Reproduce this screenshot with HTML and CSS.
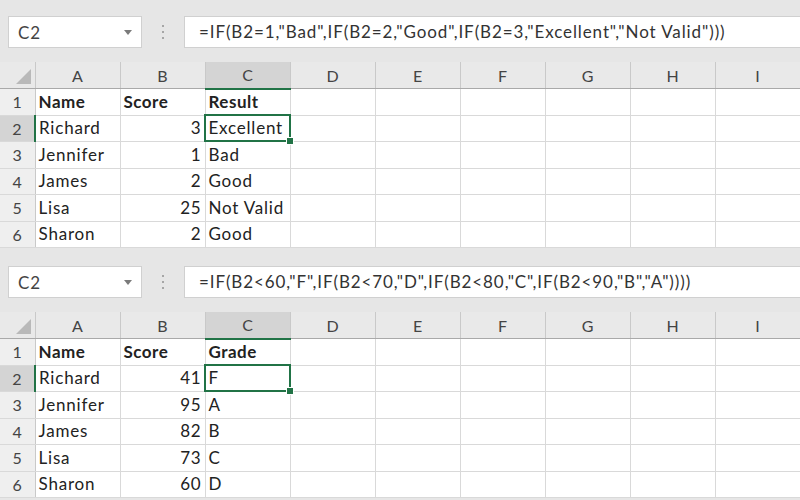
FILE: index.html
```html
<!DOCTYPE html>
<html lang="en">
<head>
  <meta charset="UTF-8">
  <title>IF Function Examples</title>
  <link rel="stylesheet" href="styles.css">
</head>
<body>
  <div class="panel">
    <div class="toolbar">
      <div class="name-box">
        <span>C2</span>
        <svg class="caret" width="8" height="5" viewBox="0 0 8 5"><path d="M0 0h8L4 5z" fill="#7b7b7b"/></svg>
      </div>
      <div class="dots"><i></i><i></i><i></i></div>
      <div class="formula">=IF(B2=1,"Bad",IF(B2=2,"Good",IF(B2=3,"Excellent","Not Valid")))</div>
    </div>
    <table class="sheet">
      <colgroup><col class="rh"><col span="9" class="col"></colgroup>
      <tr class="hdr">
        <th class="corner"><svg width="35" height="26" viewBox="0 0 35 26"><path d="M16 22h15V7z" fill="#b9b9b9"/></svg></th>
        <th>A</th><th>B</th><th class="sel">C</th><th>D</th><th>E</th><th>F</th><th>G</th><th>H</th><th>I</th>
      </tr>
      <tr><th>1</th><td class="bold">Name</td><td class="bold">Score</td><td class="bold">Result</td><td></td><td></td><td></td><td></td><td></td><td></td></tr>
      <tr><th class="sel">2</th><td>Richard</td><td class="num">3</td><td class="active">Excellent</td><td></td><td></td><td></td><td></td><td></td><td></td></tr>
      <tr><th>3</th><td>Jennifer</td><td class="num">1</td><td>Bad</td><td></td><td></td><td></td><td></td><td></td><td></td></tr>
      <tr><th>4</th><td>James</td><td class="num">2</td><td>Good</td><td></td><td></td><td></td><td></td><td></td><td></td></tr>
      <tr><th>5</th><td>Lisa</td><td class="num">25</td><td>Not Valid</td><td></td><td></td><td></td><td></td><td></td><td></td></tr>
      <tr><th>6</th><td>Sharon</td><td class="num">2</td><td>Good</td><td></td><td></td><td></td><td></td><td></td><td></td></tr>
    </table>
  </div>

  <div class="panel">
    <div class="toolbar">
      <div class="name-box">
        <span>C2</span>
        <svg class="caret" width="8" height="5" viewBox="0 0 8 5"><path d="M0 0h8L4 5z" fill="#7b7b7b"/></svg>
      </div>
      <div class="dots"><i></i><i></i><i></i></div>
      <div class="formula">=IF(B2&lt;60,"F",IF(B2&lt;70,"D",IF(B2&lt;80,"C",IF(B2&lt;90,"B","A"))))</div>
    </div>
    <table class="sheet">
      <colgroup><col class="rh"><col span="9" class="col"></colgroup>
      <tr class="hdr">
        <th class="corner"><svg width="35" height="26" viewBox="0 0 35 26"><path d="M16 22h15V7z" fill="#b9b9b9"/></svg></th>
        <th>A</th><th>B</th><th class="sel">C</th><th>D</th><th>E</th><th>F</th><th>G</th><th>H</th><th>I</th>
      </tr>
      <tr><th>1</th><td class="bold">Name</td><td class="bold">Score</td><td class="bold">Grade</td><td></td><td></td><td></td><td></td><td></td><td></td></tr>
      <tr><th class="sel">2</th><td>Richard</td><td class="num">41</td><td class="active">F</td><td></td><td></td><td></td><td></td><td></td><td></td></tr>
      <tr><th>3</th><td>Jennifer</td><td class="num">95</td><td>A</td><td></td><td></td><td></td><td></td><td></td><td></td></tr>
      <tr><th>4</th><td>James</td><td class="num">82</td><td>B</td><td></td><td></td><td></td><td></td><td></td><td></td></tr>
      <tr><th>5</th><td>Lisa</td><td class="num">73</td><td>C</td><td></td><td></td><td></td><td></td><td></td><td></td></tr>
      <tr><th>6</th><td>Sharon</td><td class="num">60</td><td>D</td><td></td><td></td><td></td><td></td><td></td><td></td></tr>
    </table>
  </div>
</body>
</html>
```

FILE: styles.css
```css
* {
  margin: 0;
  padding: 0;
  box-sizing: border-box;
}

body {
  width: 800px;
  height: 500px;
  overflow: hidden;
  font-family: Lato, "Liberation Sans", sans-serif;
  color: #222;
  background: #e6e6e6;
}

.panel {
  height: 250px;
  overflow: hidden;
  background: #e6e6e6;
}

/* formula bar */
.toolbar {
  display: flex;
  align-items: center;
  height: 62px;
  padding: 16px 0 14px 8px;
}

.name-box {
  display: flex;
  align-items: center;
  justify-content: space-between;
  width: 134px;
  height: 32px;
  padding: 0 9px 0 9px;
  background: #fff;
  border: 1px solid #d0d0d0;
  font-size: 17px;
  letter-spacing: 0.8px;
  color: #444;
}

.dots {
  width: 42px;
  display: flex;
  flex-direction: column;
  align-items: center;
  gap: 4px;
}

.dots i {
  width: 2px;
  height: 2px;
  background: #a6a6a6;
}

.formula {
  flex: 1;
  height: 32px;
  margin-right: -2px;
  padding-left: 14px;
  line-height: 30px;
  background: #fff;
  border: 1px solid #d0d0d0;
  font-size: 17px;
  letter-spacing: 0.9px;
  color: #333;
  white-space: nowrap;
}

/* grid */
.sheet {
  width: 800px;
  table-layout: fixed;
  border-collapse: collapse;
  background: #fff;
  font-size: 17px;
}

.sheet .rh { width: 35px; }
.sheet .col { width: 85px; }

.sheet tr { height: 26.5px; }

.sheet td {
  padding: 0 3px;
  border-right: 1px solid #d9d9d9;
  border-bottom: 1px solid #d9d9d9;
  white-space: nowrap;
  overflow: visible;
  vertical-align: middle;
  line-height: 24px;
  letter-spacing: 0.8px;
}

.sheet td.bold { font-weight: bold; letter-spacing: 0.5px; }
.sheet td.num { text-align: right; padding-right: 3px; }

.sheet th {
  background: #efefef;
  font-weight: normal;
  color: #444;
  font-size: 16px;
  border-right: 1px solid #c9c9c9;
  border-bottom: 1px solid #d9d9d9;
}

.sheet .hdr { height: 26px; }

.sheet .hdr th {
  background: #e9e9e9;
  border-bottom: 1px solid #a9a9a9;
}

.sheet .hdr th.corner {
  padding: 0;
  line-height: 0;
  border-right-color: #c9c9c9;
}

.sheet th.sel {
  background: #d4d4d4;
}

.sheet .hdr th.sel {
  background: #d4d4d4;
  border-bottom: 2px solid #217346;
}

.sheet tr th.sel:first-child {
  border-right: 2px solid #217346;
}

.sheet td.active {
  position: relative;
}

.sheet td.active::after {
  content: "";
  position: absolute;
  top: -2px;
  left: -2px;
  right: -1px;
  bottom: -1px;
  border: 2px solid #217346;
}

.sheet td.active::before {
  content: "";
  position: absolute;
  right: -4px;
  bottom: -4px;
  width: 6px;
  height: 6px;
  background: #217346;
  border: 1px solid #fff;
  z-index: 1;
}
```
